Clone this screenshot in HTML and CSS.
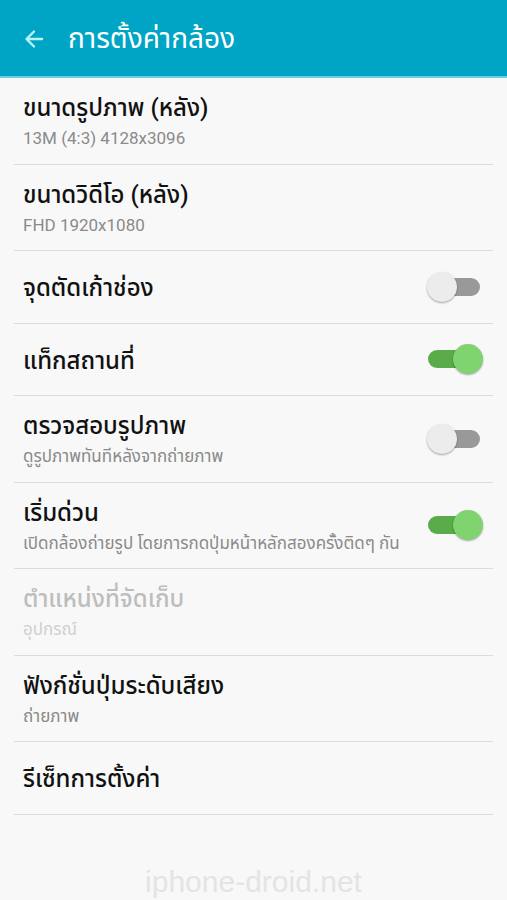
FILE: index.html
```html
<!DOCTYPE html>
<html lang="th">
<head>
    <meta charset="UTF-8">
    <meta name="viewport" content="width=device-width, initial-scale=1.0">
    <title>การตั้งค่ากล้อง</title>
    <link rel="stylesheet" href="styles.css">
</head>
<body>
    <header class="app-bar">
        <svg class="back" width="24" height="24" viewBox="0 0 24 24">
            <path d="M20 12H5M12 4.5L4.5 12l7.5 7.5" fill="none" stroke="#b8f3f6" stroke-width="2.4" stroke-linecap="round" stroke-linejoin="round"/>
        </svg>
        <h1>การตั้งค่ากล้อง</h1>
    </header>

    <ul class="settings">
        <li class="item two">
            <div class="text">
                <div class="title">ขนาดรูปภาพ (หลัง)</div>
                <div class="sub">13M (4:3) 4128x3096</div>
            </div>
        </li>
        <li class="item two">
            <div class="text">
                <div class="title">ขนาดวิดีโอ (หลัง)</div>
                <div class="sub">FHD 1920x1080</div>
            </div>
        </li>
        <li class="item">
            <div class="text">
                <div class="title">จุดตัดเก้าช่อง</div>
            </div>
            <span class="switch"></span>
        </li>
        <li class="item">
            <div class="text">
                <div class="title">แท็กสถานที่</div>
            </div>
            <span class="switch on"></span>
        </li>
        <li class="item two">
            <div class="text">
                <div class="title">ตรวจสอบรูปภาพ</div>
                <div class="sub">ดูรูปภาพทันทีหลังจากถ่ายภาพ</div>
            </div>
            <span class="switch"></span>
        </li>
        <li class="item two">
            <div class="text">
                <div class="title">เริ่มด่วน</div>
                <div class="sub">เปิดกล้องถ่ายรูป โดยการกดปุ่มหน้าหลักสองครั้งติดๆ กัน</div>
            </div>
            <span class="switch on"></span>
        </li>
        <li class="item two disabled">
            <div class="text">
                <div class="title">ตำแหน่งที่จัดเก็บ</div>
                <div class="sub">อุปกรณ์</div>
            </div>
        </li>
        <li class="item two">
            <div class="text">
                <div class="title">ฟังก์ชั่นปุ่มระดับเสียง</div>
                <div class="sub">ถ่ายภาพ</div>
            </div>
        </li>
        <li class="item">
            <div class="text">
                <div class="title">รีเซ็ทการตั้งค่า</div>
            </div>
        </li>
    </ul>

    <div class="watermark">iphone-droid.net</div>
</body>
</html>
```

FILE: styles.css
```css
* {
    box-sizing: border-box;
}

body {
    margin: 0;
    background: #f8f8f8;
    font-family: Roboto, "Noto Sans", "Noto Sans Thai", sans-serif;
    color: #111;
    overflow: hidden;
}

.app-bar {
    height: 78px;
    padding: 2px 0 0 22px;
    background: #00a5c5;
    border-bottom: 2px solid #6fcfe0;
    display: flex;
    align-items: center;
}

.app-bar .back {
    width: 24px;
    height: 24px;
    margin-right: 22px;
}

.app-bar h1 {
    margin: 0;
    font-size: 28px;
    font-weight: 400;
    color: #ffffff;
}

.settings {
    list-style: none;
    margin: 0;
    padding: 0 14px;
}

.item {
    display: flex;
    align-items: center;
    height: 72.5px;
    padding-left: 9px;
    border-bottom: 1px solid #dcdcdc;
}

.item.two {
    height: 86.5px;
}

.text {
    flex: 1;
    min-width: 0;
    padding-top: 3px;
}

.title {
    font-size: 24px;
    font-weight: 500;
    line-height: 32px;
    color: #111111;
}

.sub {
    font-size: 17px;
    line-height: 28px;
    color: #8a8a8a;
    white-space: nowrap;
}

.disabled .title {
    color: #bdbdbd;
}

.disabled .sub {
    color: #cfcfcf;
}

.switch {
    position: relative;
    flex: none;
    width: 52px;
    height: 18px;
    margin-right: 13px;
    border-radius: 9px;
    background: #999999;
}

.switch::after {
    content: "";
    position: absolute;
    top: -6px;
    left: -1px;
    width: 30px;
    height: 30px;
    border-radius: 50%;
    background: #ececec;
    box-shadow: 0 1px 2px rgba(0, 0, 0, 0.35);
}

.switch.on {
    background: #5aab49;
}

.switch.on::after {
    left: auto;
    right: -3px;
    background: #80d46f;
}

.watermark {
    margin-top: 50px;
    text-align: center;
    font-family: "Liberation Sans", sans-serif;
    font-size: 30px;
    line-height: 34px;
    color: #e4e4e4;
}
```
